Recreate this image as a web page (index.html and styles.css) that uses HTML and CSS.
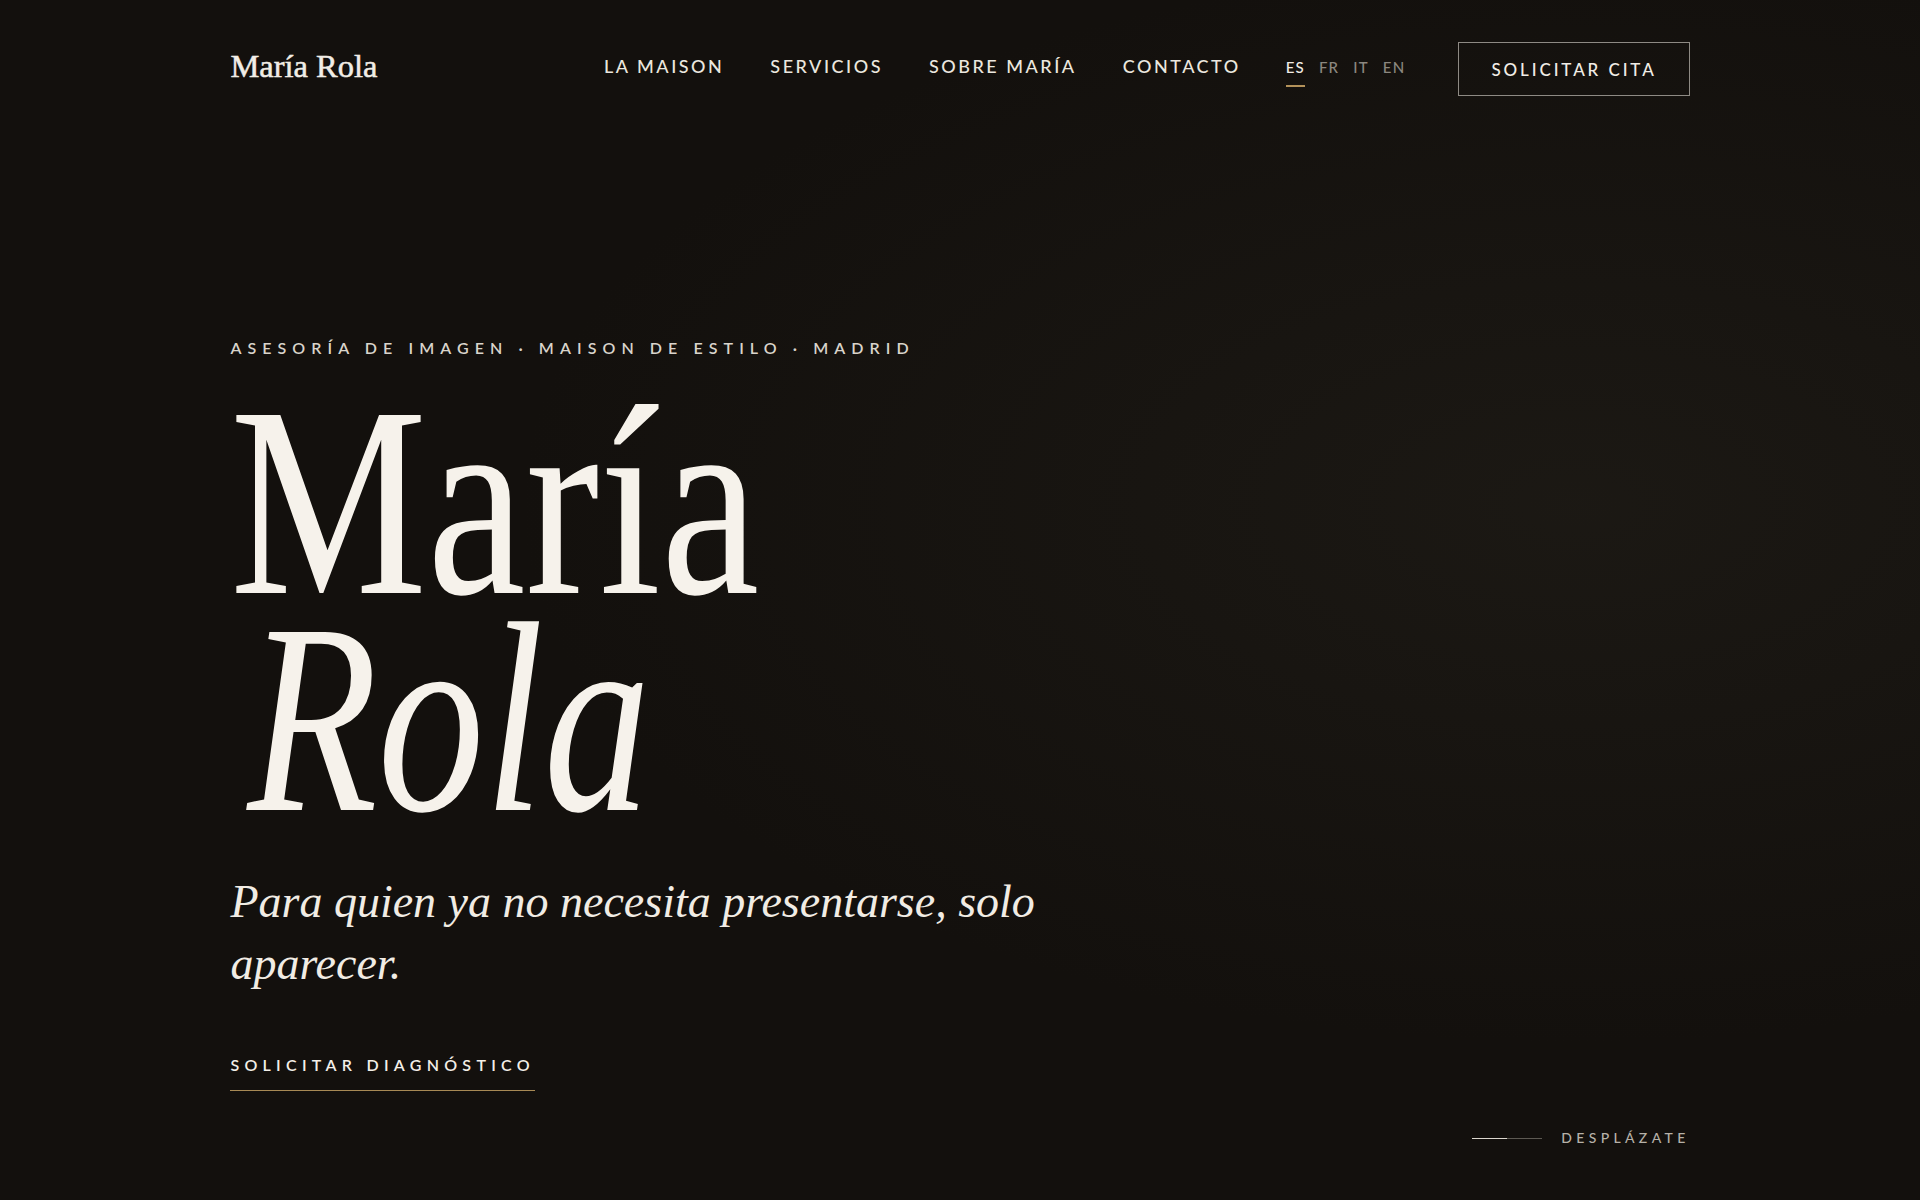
FILE: index.html
```html
<!DOCTYPE html>
<html lang="es">
<head>
<meta charset="utf-8">
<title>María Rola — Asesoría de imagen</title>
<link rel="stylesheet" href="styles.css">
</head>
<body>
<div class="page">
  <header class="topbar">
    <a class="logo" href="#">María Rola</a>
    <div class="topbar-right">
      <nav class="mainnav">
        <a href="#">LA MAISON</a>
        <a href="#">SERVICIOS</a>
        <a href="#">SOBRE MARÍA</a>
        <a href="#">CONTACTO</a>
      </nav>
      <div class="langs">
        <a class="lang lang-active" href="#">ES</a>
        <a class="lang" href="#">FR</a>
        <a class="lang" href="#">IT</a>
        <a class="lang" href="#">EN</a>
      </div>
      <a class="btn-outline" href="#">SOLICITAR CITA</a>
    </div>
  </header>

  <main class="hero">
    <p class="eyebrow">ASESORÍA DE IMAGEN · MAISON DE ESTILO · MADRID</p>
    <h1 class="title">
      <span class="title-line title-roman">María</span>
      <span class="title-line title-italic">Rola</span>
    </h1>
    <p class="lede">Para quien ya no necesita presentarse, solo aparecer.</p>
    <a class="cta" href="#">SOLICITAR DIAGNÓSTICO</a>
    <div class="scroll-cue">
      <span class="cue-line"></span>
      <span class="cue-text">DESPLÁZATE</span>
    </div>
  </main>
</div>
</body>
</html>
```
FILE: styles.css
```css
html, body {
  margin: 0;
  padding: 0;
}

body {
  background: #12100d;
  color: #ece8e0;
  font-family: "Lato", "Noto Sans", sans-serif;
}

a {
  color: inherit;
  text-decoration: none;
}

.page {
  min-height: 100vh;
  box-sizing: border-box;
  padding: 0 12vw;
  background:
    radial-gradient(ellipse 55% 45% at 82% 42%, rgba(40, 37, 30, 0.4) 0%, rgba(18, 16, 13, 0) 100%),
    #13100d;
}

/* ---------- header ---------- */
.topbar {
  display: flex;
  justify-content: space-between;
  align-items: center;
  padding-top: 42px;
  height: 54px;
}

.logo {
  font-family: "Liberation Serif", "Times New Roman", serif;
  font-size: 32.5px;
  line-height: 1.2;
  padding-bottom: 5px;
  color: #f1ede6;
  -webkit-text-stroke: 0.5px #f1ede6;
}

.topbar-right {
  display: flex;
  align-items: center;
}

.mainnav {
  display: flex;
  gap: 46px;
  margin-right: 45px;
  padding-bottom: 4px;
}

.mainnav a {
  font-size: 18px;
  line-height: 1.2;
  letter-spacing: 0.14em;
  font-weight: 500;
  color: #ebe7df;
}

.langs {
  display: flex;
  gap: 14px;
  margin-right: 53px;
  padding-bottom: 4px;
}

.lang {
  position: relative;
  font-size: 15px;
  line-height: 1.2;
  letter-spacing: 0.08em;
  color: #8b877f;
  font-weight: 500;
}

.lang-active {
  color: #f1ede6;
}

.lang-active::after {
  content: "";
  position: absolute;
  left: 0;
  right: 0;
  top: 27px;
  height: 2px;
  background: #b3925a;
}

.btn-outline {
  display: flex;
  align-items: center;
  height: 54px;
  box-sizing: border-box;
  padding: 0 32px;
  border: 1px solid #8e8a84;
  font-size: 17px;
  letter-spacing: 0.17em;
  font-weight: 500;
  color: #f1ede6;
}

/* ---------- hero ---------- */
.hero {
  display: flex;
  flex-direction: column;
  align-items: flex-start;
  padding-top: 242px;
}

.eyebrow {
  margin: 0;
  font-size: 16px;
  line-height: 1.2;
  letter-spacing: 0.38em;
  font-weight: 600;
  color: #d9d4cb;
}

.title {
  margin: 36px 0 0;
  font-family: "Liberation Serif", "Times New Roman", serif;
  font-weight: 400;
  font-size: 272px;
  line-height: 217px;
  color: #f6f2eb;
}

.title-line {
  display: block;
  height: 217px;
  transform-origin: left center;
  white-space: nowrap;
}

.title-roman {
  transform: scaleX(0.815);
}

.title-italic {
  font-style: italic;
  padding-left: 22px;
  transform: scaleX(0.785);
}

.lede {
  margin: 44px 0 0;
  max-width: 900px;
  font-family: "Liberation Serif", "Times New Roman", serif;
  font-style: italic;
  font-size: 46px;
  line-height: 62px;
  color: #f1ece4;
}

.cta {
  margin-top: 60px;
  padding-bottom: 16px;
  border-bottom: 1px solid #a88a55;
  font-size: 16px;
  line-height: 1.2;
  letter-spacing: 0.33em;
  font-weight: 600;
  color: #f3efe8;
}

.scroll-cue {
  align-self: flex-end;
  display: flex;
  align-items: center;
  gap: 19px;
  margin-top: 39px;
}

.cue-line {
  display: block;
  width: 70px;
  height: 1px;
  background: linear-gradient(90deg, #dcd7ce 0 50%, #5d5952 50% 100%);
}

.cue-text {
  font-size: 14px;
  line-height: 1.2;
  letter-spacing: 0.31em;
  font-weight: 500;
  color: #b6b1a8;
}
```
